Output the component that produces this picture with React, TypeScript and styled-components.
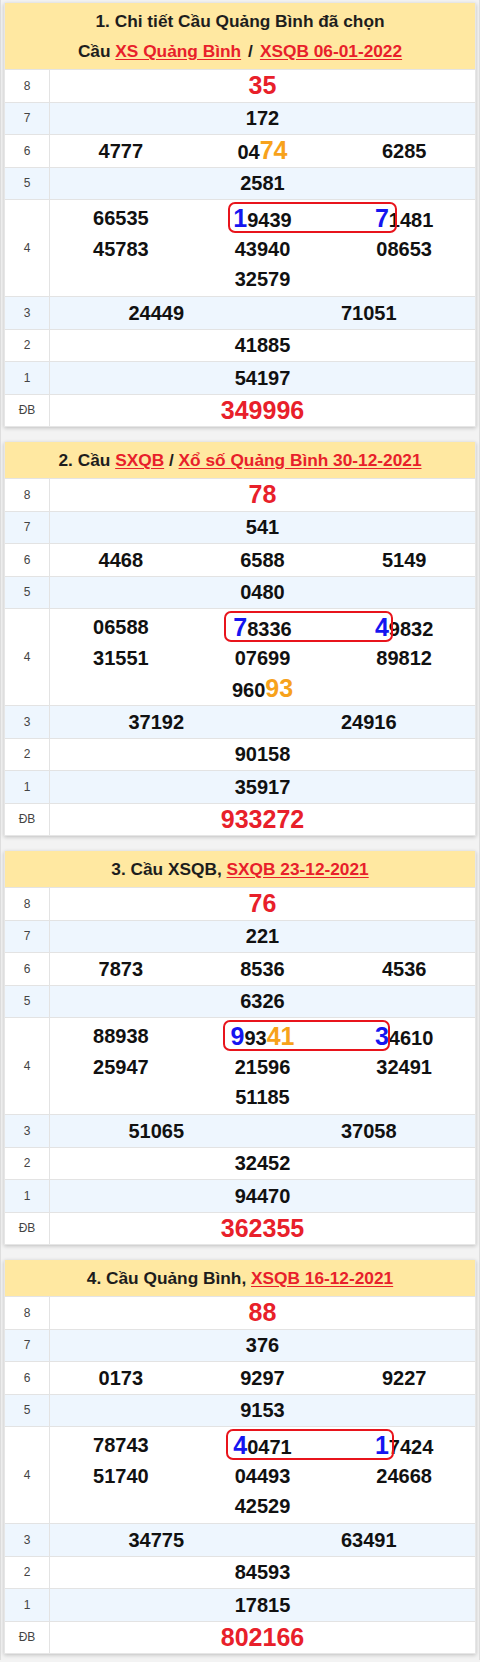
import React from "react";
import styled, { createGlobalStyle } from "styled-components";

const Global = createGlobalStyle`
  html, body { margin: 0; padding: 0; background: #f3f3f3; }
  body { font-family: "Liberation Sans", Arial, sans-serif; }
`;

type Tone = "n" | "b" | "o";
type Seg = [string, Tone];
type Num = string | Seg[];

interface BoxPos { left: number; top: number; width: number; height: number }

interface CardData {
  title: React.ReactNode;
  g8: string;
  g7: string;
  g6: Num[];
  g5: string;
  g4: Num[];
  g3: string[];
  g2: string;
  g1: string;
  db: string;
  box: BoxPos;
}

const Page = styled.div`
  display: flex;
  flex-direction: column;
  gap: 15px;
  padding: 3px 3px 6px;
  border-left: 1px solid #dedede;
  border-right: 1px solid #dedede;
`;

const Card = styled.section`
  background: #fff;
  box-shadow: 0 1px 4px rgba(0, 0, 0, 0.22);
  border: 1px solid #e6e6e6;
  border-top: none;
`;

const Header = styled.div`
  background: #ffe8a1;
  padding: 3px 6px;
  text-align: center;
  font-weight: 700;
  font-size: 17.3px;
  line-height: 30px;
  color: #1d1d1d;
  border-bottom: 1px solid #e4e4e4;
`;

const Slash = styled.span`
  margin: 0 7px;
`;

const HLink = styled.a`
  color: #e8202a;
  text-decoration: underline;
  text-underline-offset: 2px;
`;

const Row = styled.div<{ $alt?: boolean }>`
  display: grid;
  grid-template-columns: 45px 1fr;
  background: ${(p) => (p.$alt ? "#eef6fe" : "#fff")};
  border-bottom: 1px solid #e3e3e3;
  &:last-child { border-bottom: none; }
`;

const Label = styled.div`
  display: flex;
  align-items: center;
  justify-content: center;
  border-right: 1px solid #e3e3e3;
  font-size: 12px;
  line-height: 1;
  color: #444;
  min-height: 31.5px;
`;

const Cells = styled.div<{ $cols: number }>`
  display: grid;
  grid-template-columns: repeat(${(p) => p.$cols}, 1fr);
  align-items: center;
  position: relative;
`;

const Big4 = styled.div`
  display: grid;
  grid-template-columns: repeat(3, 1fr);
  grid-auto-rows: 30.5px;
  align-items: center;
  padding: 3px 0 1.5px;
  position: relative;
`;

const Cell = styled.div<{ $span?: number }>`
  text-align: center;
  font-weight: 700;
  font-size: 20px;
  line-height: 1;
  color: #111;
  grid-column: ${(p) => (p.$span ? `span ${p.$span}` : "auto")};
`;

const Red = styled.span`
  color: #e8202a;
  font-size: 25px;
`;

const Hi = styled.span<{ $tone: Tone }>`
  font-size: ${(p) => (p.$tone === "n" ? "20px" : "25px")};
  color: ${(p) => (p.$tone === "b" ? "#1515f0" : p.$tone === "o" ? "#f7a21b" : "#111")};
`;

const Box = styled.div`
  position: absolute;
  box-sizing: border-box;
  border: 2px solid #e8141c;
  border-radius: 7px;
  pointer-events: none;
`;

const renderNum = (n: Num) =>
  typeof n === "string"
    ? n
    : n.map(([t, tone], i) => (
        <Hi key={i} $tone={tone}>
          {t}
        </Hi>
      ));

const cards: CardData[] = [
  {
    title: (
      <>
        1. Chi tiết Cầu Quảng Bình đã chọn
        <br />
        Cầu <HLink>XS Quảng Bình</HLink>
        <Slash>/</Slash>
        <HLink>XSQB 06-01-2022</HLink>
      </>
    ),
    g8: "35",
    g7: "172",
    g6: ["4777", [["04", "n"], ["74", "o"]], "6285"],
    g5: "2581",
    g4: [
      "66535",
      [["1", "b"], ["9439", "n"]],
      [["7", "b"], ["1481", "n"]],
      "45783",
      "43940",
      "08653",
      "32579",
    ],
    g3: ["24449", "71051"],
    g2: "41885",
    g1: "54197",
    db: "349996",
    box: { left: 178, top: 1.5, width: 169, height: 31 },
  },
  {
    title: (
      <>
        2. Cầu <HLink>SXQB</HLink> / <HLink>Xổ số Quảng Bình 30-12-2021</HLink>
      </>
    ),
    g8: "78",
    g7: "541",
    g6: ["4468", "6588", "5149"],
    g5: "0480",
    g4: [
      "06588",
      [["7", "b"], ["8336", "n"]],
      [["4", "b"], ["9832", "n"]],
      "31551",
      "07699",
      "89812",
      [["960", "n"], ["93", "o"]],
    ],
    g3: ["37192", "24916"],
    g2: "90158",
    g1: "35917",
    db: "933272",
    box: { left: 174, top: 1.5, width: 169, height: 31 },
  },
  {
    title: (
      <>
        3. Cầu XSQB, <HLink>SXQB 23-12-2021</HLink>
      </>
    ),
    g8: "76",
    g7: "221",
    g6: ["7873", "8536", "4536"],
    g5: "6326",
    g4: [
      "88938",
      [["9", "b"], ["93", "n"], ["41", "o"]],
      [["3", "b"], ["4610", "n"]],
      "25947",
      "21596",
      "32491",
      "51185",
    ],
    g3: ["51065", "37058"],
    g2: "32452",
    g1: "94470",
    db: "362355",
    box: { left: 173, top: 1.5, width: 167, height: 31 },
  },
  {
    title: (
      <>
        4. Cầu Quảng Bình, <HLink>XSQB 16-12-2021</HLink>
      </>
    ),
    g8: "88",
    g7: "376",
    g6: ["0173", "9297", "9227"],
    g5: "9153",
    g4: [
      "78743",
      [["4", "b"], ["0471", "n"]],
      [["1", "b"], ["7424", "n"]],
      "51740",
      "04493",
      "24668",
      "42529",
    ],
    g3: ["34775", "63491"],
    g2: "84593",
    g1: "17815",
    db: "802166",
    box: { left: 176, top: 1.5, width: 168, height: 31 },
  },
];

const Single = ({ label, alt, children }: { label: string; alt?: boolean; children: React.ReactNode }) => (
  <Row $alt={alt}>
    <Label>{label}</Label>
    <Cells $cols={1}>
      <Cell>{children}</Cell>
    </Cells>
  </Row>
);

const LotteryCard = ({ d }: { d: CardData }) => (
  <Card>
    <Header>{d.title}</Header>
    <Single label="8">
      <Red>{d.g8}</Red>
    </Single>
    <Single label="7" alt>
      {d.g7}
    </Single>
    <Row>
      <Label>6</Label>
      <Cells $cols={3}>
        {d.g6.map((n, i) => (
          <Cell key={i}>{renderNum(n)}</Cell>
        ))}
      </Cells>
    </Row>
    <Single label="5" alt>
      {d.g5}
    </Single>
    <Row>
      <Label>4</Label>
      <Big4>
        {d.g4.map((n, i) => (
          <Cell key={i} $span={i === 6 ? 3 : undefined}>
            {renderNum(n)}
          </Cell>
        ))}
        <Box
          style={{
            left: d.box.left,
            top: d.box.top,
            width: d.box.width,
            height: d.box.height,
          }}
        />
      </Big4>
    </Row>
    <Row $alt>
      <Label>3</Label>
      <Cells $cols={2}>
        {d.g3.map((n, i) => (
          <Cell key={i}>{n}</Cell>
        ))}
      </Cells>
    </Row>
    <Single label="2">{d.g2}</Single>
    <Single label="1" alt>
      {d.g1}
    </Single>
    <Single label="ĐB">
      <Red>{d.db}</Red>
    </Single>
  </Card>
);

export default function App() {
  return (
    <>
      <Global />
      <Page>
        {cards.map((c, i) => (
          <LotteryCard key={i} d={c} />
        ))}
      </Page>
    </>
  );
}
